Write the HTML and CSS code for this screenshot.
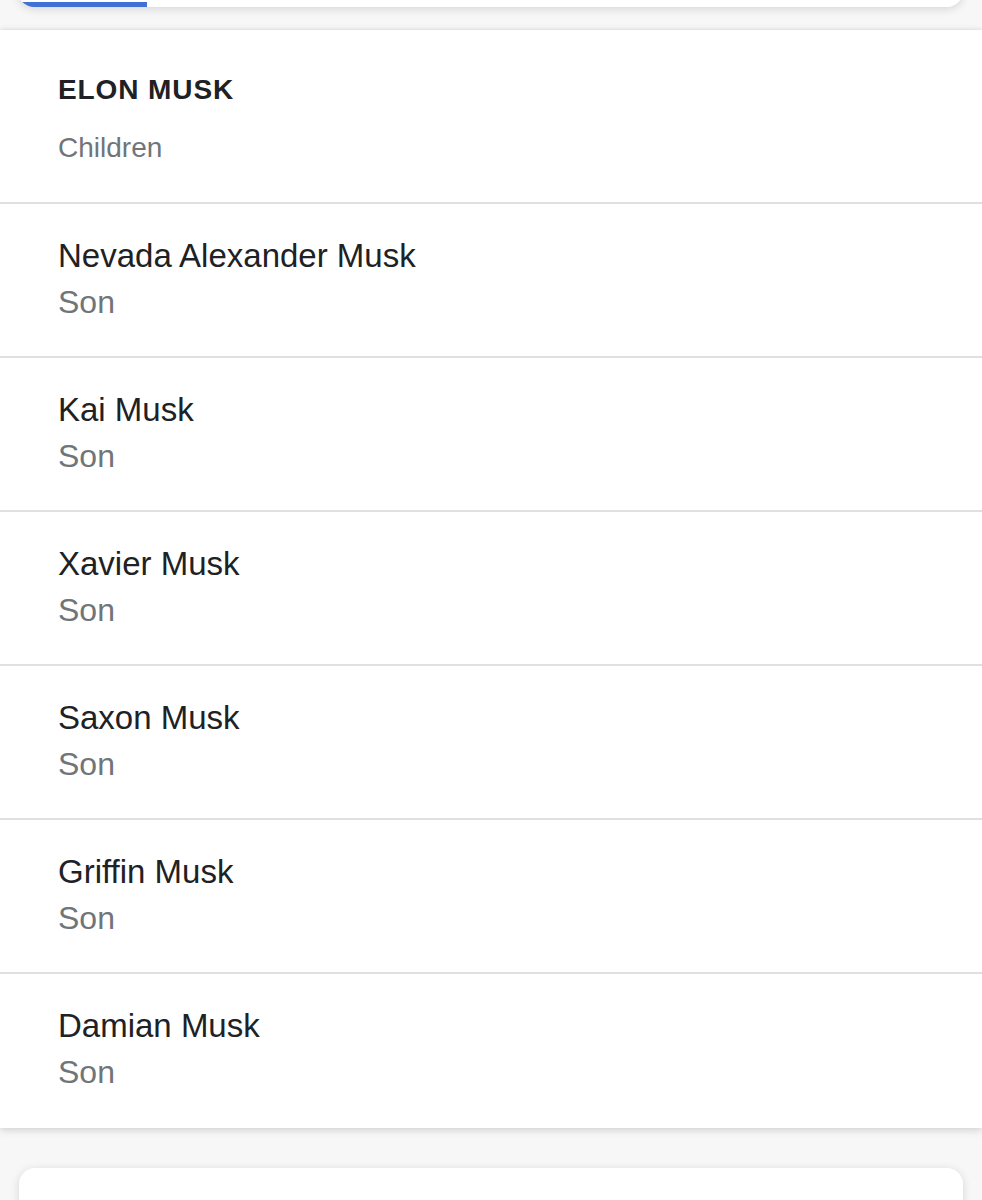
FILE: index.html
```html
<!DOCTYPE html>
<html lang="en">
<head>
    <meta charset="UTF-8">
    <meta name="viewport" content="width=device-width, initial-scale=1.0">
    <title>Elon Musk - Children</title>
    <link rel="stylesheet" href="styles.css">
</head>
<body>
    <div class="page">
        <div class="card card-prev">
            <div class="tab-indicator"></div>
        </div>

        <div class="panel">
            <div class="panel-header">
                <h2 class="panel-title">Elon Musk</h2>
                <div class="panel-sub">Children</div>
            </div>
            <ul class="people">
                <li class="person">
                    <div class="person-name">Nevada Alexander Musk</div>
                    <div class="person-rel">Son</div>
                </li>
                <li class="person">
                    <div class="person-name">Kai Musk</div>
                    <div class="person-rel">Son</div>
                </li>
                <li class="person">
                    <div class="person-name">Xavier Musk</div>
                    <div class="person-rel">Son</div>
                </li>
                <li class="person">
                    <div class="person-name">Saxon Musk</div>
                    <div class="person-rel">Son</div>
                </li>
                <li class="person">
                    <div class="person-name">Griffin Musk</div>
                    <div class="person-rel">Son</div>
                </li>
                <li class="person">
                    <div class="person-name">Damian Musk</div>
                    <div class="person-rel">Son</div>
                </li>
            </ul>
        </div>

        <div class="card card-next"></div>
    </div>
</body>
</html>
```

FILE: styles.css
```css
* {
    margin: 0;
    padding: 0;
    box-sizing: border-box;
}

html, body {
    height: 1200px;
    overflow: hidden;
}

body {
    background: #f7f7f7;
    font-family: "Liberation Sans", Arial, Helvetica, sans-serif;
    color: #202124;
}

.page {
    display: flex;
    flex-direction: column;
}

.card {
    background: #fff;
    border-radius: 16px;
    margin: 0 19px;
    box-shadow: 0 2px 10px rgba(0, 0, 0, 0.14);
    overflow: hidden;
}

.card-prev {
    height: 60px;
    margin-top: -53px;
    display: flex;
    align-items: flex-end;
    margin-left: 18px;
}

.tab-indicator {
    width: 129px;
    height: 5px;
    background: #4271d6;
}

.card-next {
    height: 120px;
    margin-top: 40px;
}

.panel {
    margin-top: 23px;
    background: #fff;
    box-shadow: 0 2px 8px rgba(0, 0, 0, 0.16), 0 -1px 3px rgba(0, 0, 0, 0.05);
    padding-bottom: 2px;
}

.panel-header {
    padding: 43px 58px 37px;
}

.panel-title {
    font-size: 28px;
    line-height: 34px;
    font-weight: bold;
    text-transform: uppercase;
    letter-spacing: 0.9px;
}

.panel-sub {
    margin-top: 24px;
    font-size: 28px;
    line-height: 34px;
    color: #70757a;
}

.people {
    list-style: none;
}

.person {
    border-top: 2px solid #e0e0e0;
    padding: 28px 58px 30px;
}

.person-name {
    font-size: 33px;
    line-height: 47px;
}

.person-rel {
    font-size: 32px;
    line-height: 47px;
    color: #70757a;
}
```
